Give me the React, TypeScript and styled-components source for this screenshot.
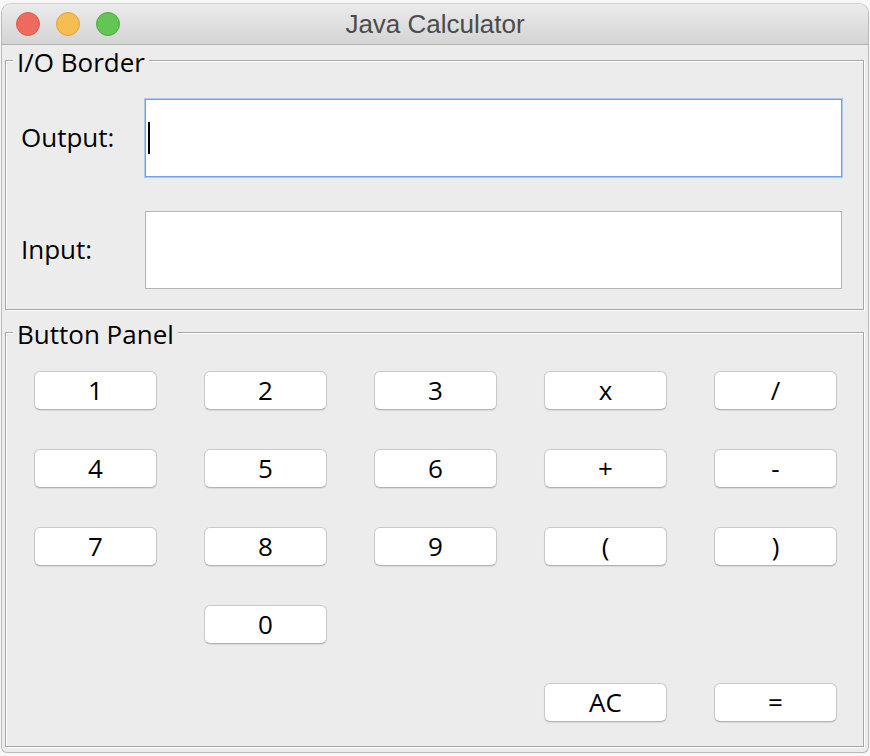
import React from "react";
import styled, { createGlobalStyle } from "styled-components";

const Global = createGlobalStyle`
  html, body { margin: 0; padding: 0; background: #f7f7f7; }
  body { font-family: "Open Sans", "Noto Sans", sans-serif; }
  * { box-sizing: border-box; }
`;

const Window = styled.div`
  margin: 3px 0 0 1px;
  width: 868px;
  height: 750px;
  background: #ececec;
  border: 1px solid #b9b9b9;
  border-top-color: #d0d0d0;
  border-radius: 10px 10px 6px 6px;
  overflow: hidden;
  display: flex;
  flex-direction: column;
`;

const TitleBar = styled.div`
  height: 41px;
  flex: none;
  display: grid;
  grid-template-columns: 1fr auto 1fr;
  align-items: center;
  background: linear-gradient(#ebebeb, #d4d4d4);
  border-bottom: 1px solid #b3b3b3;
`;

const Lights = styled.div`
  display: flex;
  gap: 16px;
  padding-left: 14px;
`;

const Light = styled.span<{ $fill: string; $edge: string }>`
  width: 24px;
  height: 24px;
  border-radius: 50%;
  background: ${(p) => p.$fill};
  border: 1px solid ${(p) => p.$edge};
`;

const Title = styled.div`
  font-family: "Liberation Sans", Arial, sans-serif;
  font-size: 26px;
  color: #4b4b4b;
`;

const Body = styled.div`
  padding: 0 4px 0 3px;
  display: flex;
  flex-direction: column;
`;

const Group = styled.fieldset<{ $gap?: number }>`
  margin: ${(p) => p.$gap ?? 0}px 0 0 0;
  padding: 0;
  min-width: 0;
  border: 1px solid #a6a6a6;
  box-shadow: inset 1px 1px 0 #ffffff, 1px 1px 0 #ffffff;
`;

const Legend = styled.legend`
  margin-left: 7px;
  padding: 3px 4px 0 4px;
  font-size: 26px;
  line-height: 28px;
  color: #000;
  background: #ececec;
`;

const FieldRows = styled.div`
  display: flex;
  flex-direction: column;
  gap: 34px;
  padding: 23px 21px 20px 15px;
`;

const FieldRow = styled.div`
  display: grid;
  grid-template-columns: 124px 1fr;
  align-items: center;
`;

const Label = styled.label`
  font-size: 26px;
  color: #000;
  margin-top: -2px;
`;

const Field = styled.div<{ $focused?: boolean }>`
  height: 78px;
  background: #fff;
  display: flex;
  align-items: center;
  padding-left: 2px;
  border: 1px solid ${(p) => (p.$focused ? "#6ea2e4" : "#b4b4b4")};
  box-shadow: ${(p) => (p.$focused ? "0 0 0 1px #a9c9f1" : "none")};
`;

const Caret = styled.span`
  width: 2px;
  height: 32px;
  background: #000;
`;

const Keys = styled.div`
  display: grid;
  grid-template-columns: repeat(5, 123px);
  grid-template-rows: repeat(5, 39px);
  column-gap: 47px;
  row-gap: 39px;
  padding: 23px 0 24px 28px;
`;

const Key = styled.button<{ $col: number; $row: number }>`
  grid-column: ${(p) => p.$col};
  grid-row: ${(p) => p.$row};
  margin: 0;
  padding: 0 0 2px 0;
  background: #fff;
  border: 1px solid #c9c9c9;
  border-bottom-color: #b3b3b3;
  border-radius: 6px;
  box-shadow: 0 1px 1px rgba(0, 0, 0, 0.08);
  font-family: "Open Sans", "Noto Sans", sans-serif;
  font-size: 26px;
  line-height: 1;
  color: #000;
  display: flex;
  align-items: center;
  justify-content: center;
`;

const keys: { t: string; c: number; r: number }[] = [
  { t: "1", c: 1, r: 1 },
  { t: "2", c: 2, r: 1 },
  { t: "3", c: 3, r: 1 },
  { t: "x", c: 4, r: 1 },
  { t: "/", c: 5, r: 1 },
  { t: "4", c: 1, r: 2 },
  { t: "5", c: 2, r: 2 },
  { t: "6", c: 3, r: 2 },
  { t: "+", c: 4, r: 2 },
  { t: "-", c: 5, r: 2 },
  { t: "7", c: 1, r: 3 },
  { t: "8", c: 2, r: 3 },
  { t: "9", c: 3, r: 3 },
  { t: "(", c: 4, r: 3 },
  { t: ")", c: 5, r: 3 },
  { t: "0", c: 2, r: 4 },
  { t: "AC", c: 4, r: 5 },
  { t: "=", c: 5, r: 5 },
];

export default function App() {
  return (
    <>
      <Global />
      <Window>
        <TitleBar>
          <Lights>
            <Light $fill="#ee6a5f" $edge="#dc5b50" />
            <Light $fill="#f6be50" $edge="#dfa23d" />
            <Light $fill="#62c554" $edge="#50aa42" />
          </Lights>
          <Title>Java Calculator</Title>
          <span />
        </TitleBar>
        <Body>
          <Group>
            <Legend>I/O Border</Legend>
            <FieldRows>
              <FieldRow>
                <Label>Output:</Label>
                <Field $focused>
                  <Caret />
                </Field>
              </FieldRow>
              <FieldRow>
                <Label>Input:</Label>
                <Field />
              </FieldRow>
            </FieldRows>
          </Group>
          <Group $gap={7}>
            <Legend>Button Panel</Legend>
            <Keys>
              {keys.map((k) => (
                <Key key={k.t} $col={k.c} $row={k.r}>
                  {k.t}
                </Key>
              ))}
            </Keys>
          </Group>
        </Body>
      </Window>
    </>
  );
}
